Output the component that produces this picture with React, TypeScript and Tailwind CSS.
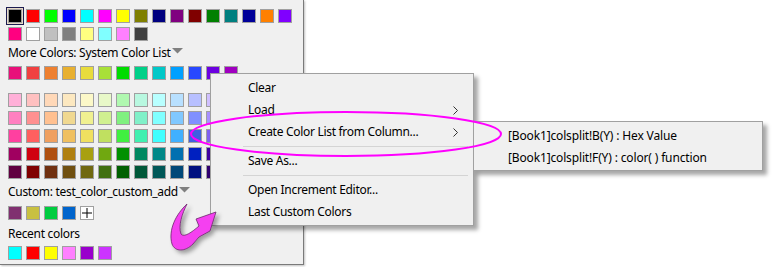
import React from "react";

const row1 = [
  "#000000", "#ff0000", "#00ff00", "#0000ff", "#00ffff", "#ff00ff", "#ffff00", "#808000",
  "#000080", "#800080", "#800000", "#008000", "#008080", "#000099", "#ff8000", "#8000ff",
];
const row2 = ["#ff0080", "#ffffff", "#c0c0c0", "#808080", "#ffff80", "#80ffff", "#ff80ff", "#404040"];
const systemList = [
  "#e8107a", "#f04040", "#ee8030", "#e8b030", "#e8dc3c", "#a8e038", "#00dc00",
  "#00d088", "#00c8c8", "#00a0ff", "#2848ff", "#6c00e0", "#a000c0",
];
const grid = [
  ["#ffb0d8", "#ffc0c0", "#ffd8b8", "#fce8c0", "#fcf8c8", "#e8f8c8", "#b0f8b0", "#b8f8e0", "#b8ffff", "#b8e0ff", "#b8c0ff", "#d0c0ff", "#e8c0ff"],
  ["#ff80c0", "#ff9090", "#ffc090", "#f0d890", "#f0f090", "#d0f090", "#80f080", "#80f0c8", "#80ffff", "#80c8ff", "#8090ff", "#a890ff", "#d090ff"],
  ["#ff40a0", "#ff6060", "#f0a060", "#f0c060", "#f0e060", "#c0e060", "#40f040", "#40f0b0", "#40ffff", "#40b0ff", "#4060e0", "#8060f0", "#c060f0"],
  ["#a00060", "#d00010", "#b05010", "#b08010", "#a8a010", "#70a810", "#009000", "#008860", "#008888", "#0070b0", "#0020c0", "#4000a0", "#800090"],
  ["#600040", "#800000", "#703010", "#705010", "#706810", "#407010", "#006000", "#005838", "#005858", "#004878", "#001080", "#300070", "#500060"],
];
const custom = ["#803070", "#c8c040", "#00cc40", "#0064cc"];
const recent = ["#00ffff", "#ff0000", "#ffff00", "#ff80ff", "#9900cc", "#cc33ff"];

function Swatch({ color, selected }: { color: string; selected?: boolean }) {
  return (
    <div
      className={
        "w-[14px] h-[14px] shrink-0 border border-[#a0a0a0] " +
        (selected ? "shadow-[0_0_0_1px_#e8dcc8,0_0_0_2px_#1c1c50]" : "")
      }
      style={{ backgroundColor: color }}
    />
  );
}

function SwatchRow({ colors, first }: { colors: string[]; first?: boolean }) {
  return (
    <div className="flex gap-[4px] pl-[8px]">
      {colors.map((c, i) => (
        <Swatch key={i} color={c} selected={first && i === 0} />
      ))}
    </div>
  );
}

function DropTriangle() {
  return (
    <svg width="11" height="6" viewBox="0 0 11 6" className="ml-[1px] mt-[3px]">
      <polygon points="0,0 11,0 5.5,5.5" fill="#808080" />
    </svg>
  );
}

function MenuItem({ label, arrow }: { label: string; arrow?: boolean }) {
  return (
    <div className="h-[22px] flex items-center pl-[37px] pr-[15px] justify-between">
      <span>{label}</span>
      {arrow && (
        <svg width="5" height="9" viewBox="0 0 5 9">
          <polyline points="0.5,0.5 4.5,4.5 0.5,8.5" fill="none" stroke="#333" strokeWidth="1" />
        </svg>
      )}
    </div>
  );
}

function Separator() {
  return (
    <div className="h-[7px] flex items-center pl-[32px] pr-[5px]">
      <div className="h-px w-full bg-[#d4d4d4]" />
    </div>
  );
}

export default function App() {
  return (
    <div className="relative w-[774px] h-[267px] bg-white overflow-hidden font-['Noto_Sans',sans-serif] text-[12px] tracking-[-0.3px] text-black">
      {/* palette panel */}
      <div className="w-[304px] h-[265px] bg-[#f0f0f0] border-r border-b border-[#7a7a7a] shadow-[1px_1px_2px_rgba(0,0,0,0.25)] flex flex-col pt-[9px]">
        <SwatchRow colors={row1} first />
        <div className="mt-[4px]">
          <SwatchRow colors={row2} />
        </div>
        <div className="mt-[4px] h-[16px] leading-[16px] pl-[8px] flex items-start">
          <span>More Colors: System Color List</span>
          <DropTriangle />
        </div>
        <div className="mt-[5px]">
          <SwatchRow colors={systemList} />
        </div>
        <div className="mt-[13px] flex flex-col gap-[4px]">
          {grid.map((r, i) => (
            <SwatchRow key={i} colors={r} />
          ))}
        </div>
        <div className="mt-[5px] h-[16px] leading-[16px] pl-[8px] flex items-start">
          <span>Custom: test_color_custom_add</span>
          <DropTriangle />
        </div>
        <div className="mt-[6px] flex gap-[4px] pl-[8px]">
          {custom.map((c, i) => (
            <Swatch key={i} color={c} />
          ))}
          <div className="w-[14px] h-[14px] bg-white border border-[#a0a0a0] flex items-center justify-center">
            <svg width="10" height="10" viewBox="0 0 10 10">
              <line x1="5" y1="0" x2="5" y2="10" stroke="#000" strokeWidth="1" />
              <line x1="0" y1="5" x2="10" y2="5" stroke="#000" strokeWidth="1" />
            </svg>
          </div>
        </div>
        <div className="mt-[6px] h-[16px] leading-[16px] pl-[8px]">Recent colors</div>
        <div className="mt-[4px]">
          <SwatchRow colors={recent} />
        </div>
      </div>

      {/* context menu */}
      <div className="absolute left-[210px] top-[73px] w-[264px] bg-[#f0f0f0] border border-[#a0a0a0] shadow-[4px_4px_4px_rgba(0,0,0,0.35)] pt-[3px] pb-[2px]">
        <MenuItem label="Clear" />
        <MenuItem label="Load" arrow />
        <MenuItem label="Create Color List from Column..." arrow />
        <Separator />
        <MenuItem label="Save As..." />
        <Separator />
        <MenuItem label="Open Increment Editor..." />
        <MenuItem label="Last Custom Colors" />
      </div>

      {/* submenu */}
      <div className="absolute left-[473px] top-[121px] w-[290px] bg-[#f0f0f0] border border-[#a0a0a0] shadow-[4px_4px_4px_rgba(0,0,0,0.35)] pt-[3px] pb-[1px] tracking-[-0.15px]">
        <div className="h-[22px] flex items-center pl-[34px]">[Book1]colsplit!B(Y) : Hex Value</div>
        <div className="h-[22px] flex items-center pl-[34px]">[Book1]colsplit!F(Y) : color( ) function</div>
      </div>

      {/* annotations */}
      <svg className="absolute left-0 top-0 pointer-events-none" width="774" height="267" viewBox="0 0 774 267">
        <defs>
          <filter id="sh" x="-30%" y="-30%" width="160%" height="160%">
            <feDropShadow dx="3" dy="3" stdDeviation="2" floodColor="#000" floodOpacity="0.35" />
          </filter>
        </defs>
        <ellipse cx="346" cy="134" rx="155" ry="22" fill="none" stroke="#ff00ff" strokeWidth="2" />
        <path
          d="M 187 204 C 176 214, 168 230, 172 244 C 175 252, 185 252, 193 244 L 199 237 L 210 231 L 216 212 L 196 219 L 199 226 C 192 232, 184 238, 181 234 C 178 226, 182 214, 187 204 Z"
          fill="#f540f0"
          stroke="#6a2a6a"
          strokeWidth="0.8"
          filter="url(#sh)"
        />
      </svg>
    </div>
  );
}
